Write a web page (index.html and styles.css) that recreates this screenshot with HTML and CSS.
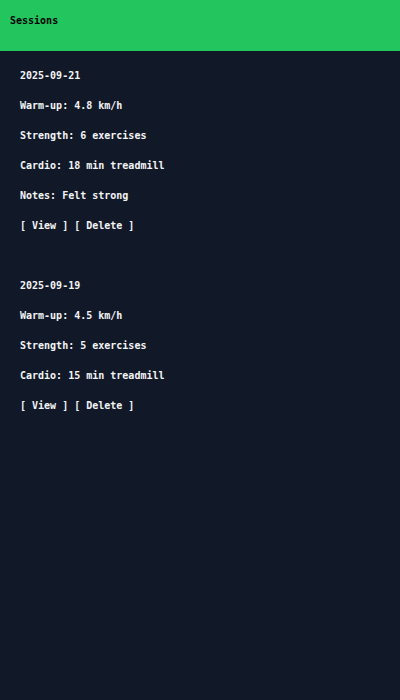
FILE: index.html
```html
<!DOCTYPE html>
<html>
<head>
<meta charset="utf-8">
<link rel="stylesheet" href="styles.css">
</head>
<body>
<header class="topbar">Sessions</header>
<main class="list">
  <section class="card">
    <div class="line">2025-09-21</div>
    <div class="line">Warm-up: 4.8 km/h</div>
    <div class="line">Strength: 6 exercises</div>
    <div class="line">Cardio: 18 min treadmill</div>
    <div class="line">Notes: Felt strong</div>
    <div class="line">[ View ] [ Delete ]</div>
  </section>
  <section class="card">
    <div class="line">2025-09-19</div>
    <div class="line">Warm-up: 4.5 km/h</div>
    <div class="line">Strength: 5 exercises</div>
    <div class="line">Cardio: 15 min treadmill</div>
    <div class="line">[ View ] [ Delete ]</div>
  </section>
</main>
</body>
</html>
```
FILE: styles.css
```css
html, body {
  margin: 0;
  padding: 0;
  background: #111827;
  height: 100%;
}
body {
  font-family: "DejaVu Sans Mono", "Liberation Mono", monospace;
  font-size: 10px;
  font-weight: bold;
  color: #f3f4f6;
}
.topbar {
  box-sizing: border-box;
  height: 51px;
  background: #22c55e;
  color: #000;
  padding: 11px 10px;
  line-height: 20px;
}
.list {
  display: flex;
  flex-direction: column;
  gap: 30px;
  padding: 10px 20px;
}
.line {
  line-height: 30px;
  white-space: pre;
}
```
